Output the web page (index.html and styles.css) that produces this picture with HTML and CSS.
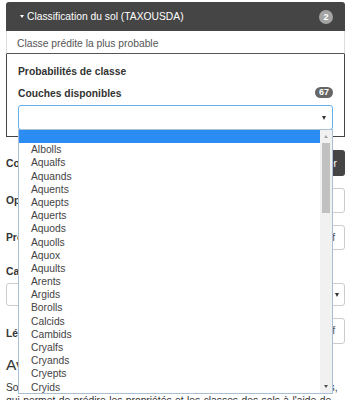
FILE: index.html
```html
<!DOCTYPE html>
<html lang="fr">
<head>
    <meta charset="UTF-8">
    <meta name="viewport" content="width=device-width, initial-scale=1.0">
    <title>Classification du sol</title>
    <link rel="stylesheet" href="styles.css">
</head>
<body>
    <div class="panel">
        <div class="panel-head">
            <span class="caret"></span>
            <span class="title">Classification du sol (TAXOUSDA)</span>
            <span class="badge-round">2</span>
        </div>
        <div class="panel-row">Classe prédite la plus probable</div>
        <div class="panel-body">
            <div class="label">Probabilités de classe</div>
            <div class="label-row">
                <span class="label">Couches disponibles</span>
                <span class="count">67</span>
            </div>
            <div class="select-wrap">
                <div class="select open"><span class="arrow"></span></div>

                <!-- liste ouverte du select -->
                <div class="listbox">
                    <div class="options">
                        <div class="option active"></div>
                        <div class="option">Albolls</div>
                        <div class="option">Aqualfs</div>
                        <div class="option">Aquands</div>
                        <div class="option">Aquents</div>
                        <div class="option">Aquepts</div>
                        <div class="option">Aquerts</div>
                        <div class="option">Aquods</div>
                        <div class="option">Aquolls</div>
                        <div class="option">Aquox</div>
                        <div class="option">Aquults</div>
                        <div class="option">Arents</div>
                        <div class="option">Argids</div>
                        <div class="option">Borolls</div>
                        <div class="option">Calcids</div>
                        <div class="option">Cambids</div>
                        <div class="option">Cryalfs</div>
                        <div class="option">Cryands</div>
                        <div class="option">Cryepts</div>
                        <div class="option">Cryids</div>
                        <div class="option">Cryods</div>
                    </div>
                    <div class="scrollbar">
                        <span class="sb-btn"><span class="tri-up"></span></span>
                        <span class="sb-thumb"></span>
                        <span class="sb-space"></span>
                        <span class="sb-btn"><span class="tri-down"></span></span>
                    </div>
                </div>
            </div>
        </div>
    </div>

    <div class="form">
        <div class="row">
            <span class="label">Couche</span>
            <button type="button" class="btn-dark">Charger</button>
        </div>
        <div class="row">
            <span class="label">Opacité</span>
            <div class="input"></div>
        </div>
        <div class="row">
            <span class="label">Profondeur</span>
            <div class="input">0-5 cm moyenne réf</div>
        </div>
        <div class="label stacked">Carte de base</div>
        <div class="select-full"><span class="arrow"></span></div>
        <div class="row low">
            <span class="label">Légende</span>
            <div class="input tall">Défaut réf</div>
        </div>

        <h2>Avertissement</h2>
        <p>
            <span class="line first">SoilGrids est un système de cartographie numérique mondiale des sols,</span>
            <span class="line second">qui permet de prédire les propriétés et les classes des sols à l'aide de</span>
            <span class="line">méthodes d'apprentissage automatique.</span>
        </p>
    </div>
</body>
</html>
```
FILE: styles.css
```css
html, body {
    height: 400px;
    overflow: hidden;
}

body {
    margin: 0;
    padding: 2px 7px 0 6px;
    font-family: "Liberation Sans", Arial, sans-serif;
    font-size: 10.3px;
    color: #333;
    background: #fff;
}

/* panneau du haut */
.panel-head {
    height: 29px;
    background: #454545;
    color: #fff;
    display: flex;
    align-items: center;
    padding: 0 12px 0 14px;
    border-radius: 3px 3px 0 0;
}

.caret {
    border-left: 2.5px solid transparent;
    border-right: 2.5px solid transparent;
    border-top: 3px solid #fff;
    margin-right: 3px;
}

.title {
    flex: 1;
}

.badge-round {
    width: 14px;
    height: 14px;
    border-radius: 50%;
    background: #a4a4a4;
    font-size: 9px;
    font-weight: bold;
    display: flex;
    align-items: center;
    justify-content: center;
}

.panel-row {
    height: 21px;
    padding: 1px 0 0 10px;
    line-height: 23px;
    color: #555;
    border-left: 1px solid #ddd;
    border-right: 1px solid #ddd;
    border-bottom: 1px solid #555;
}

.panel-body {
    border: 1px solid #444;
    border-top: 0;
    padding: 11px 11px 6px;
}

.label {
    font-weight: bold;
    line-height: 13px;
}

.label-row {
    display: flex;
    justify-content: space-between;
    align-items: flex-start;
    margin-top: 9px;
}

.count {
    height: 11px;
    line-height: 11px;
    padding: 0 4px;
    border-radius: 6px;
    background: #666;
    color: #fff;
    font-size: 9px;
    font-weight: bold;
}

.select-wrap {
    position: relative;
    margin-top: 5px;
}

.select {
    height: 23px;
    border: 1px solid #66afe9;
    border-radius: 3px;
    display: flex;
    align-items: center;
    justify-content: flex-end;
    padding-right: 6px;
}

.arrow {
    border-left: 2.5px solid transparent;
    border-right: 2.5px solid transparent;
    border-top: 4px solid #333;
}

/* liste déroulante ouverte */
.listbox {
    position: absolute;
    top: calc(100% - 1px);
    left: 0;
    right: 0;
    height: 263px;
    border: 1px solid #a9bfd6;
    background: #fff;
    display: flex;
    z-index: 5;
}

.options {
    flex: 1;
    overflow: hidden;
}

.option {
    height: 13.2px;
    line-height: 13.2px;
    padding-left: 12px;
    color: #444;
}

.option.active {
    background: #2b8cf3;
}

.scrollbar {
    width: 12px;
    background: #f1f1f1;
    display: flex;
    flex-direction: column;
}

.sb-btn {
    height: 13px;
    display: flex;
    align-items: center;
    justify-content: center;
}

.tri-up {
    border-left: 2.5px solid transparent;
    border-right: 2.5px solid transparent;
    border-bottom: 3px solid #a3a3a3;
}

.tri-down {
    border-left: 2.5px solid transparent;
    border-right: 2.5px solid transparent;
    border-top: 3px solid #505050;
}

.sb-thumb {
    height: 70px;
    margin: 0 2px;
    background: #c1c1c1;
}

.sb-space {
    flex: 1;
}

/* formulaire sous le panneau */
.form {
    margin-top: 13px;
}

.row {
    display: flex;
    justify-content: space-between;
    align-items: center;
    margin-bottom: 12px;
}

.btn-dark {
    width: 210px;
    height: 26px;
    border: none;
    border-radius: 3px;
    background: #454545;
    color: #fff;
    font: inherit;
    text-align: right;
    padding: 0 8px;
}

.input {
    width: 199px;
    height: 23px;
    line-height: 23px;
    padding: 0 9px 0 0;
    border: 1px solid #ccc;
    border-radius: 3px;
    text-align: right;
    color: #555;
}

.input.tall {
    height: 24px;
    line-height: 24px;
}

.stacked {
    margin-top: 15px;
}

.select-full {
    height: 21px;
    margin-top: 5px;
    border: 1px solid #ccc;
    border-radius: 3px;
    display: flex;
    align-items: center;
    justify-content: flex-end;
    padding-right: 5px;
}

.row.low {
    margin-top: 12px;
}

.row.low .label {
    padding-top: 5px;
}

h2 {
    margin: 10px 0 0;
    font-size: 15.5px;
    font-weight: normal;
    line-height: 18px;
}

p {
    margin: 8px 0 0;
    line-height: 12.5px;
}

.line {
    display: block;
    white-space: nowrap;
}

.line.first {
    word-spacing: 0.4px;
}

.line.second {
    word-spacing: 0.6px;
}
```
